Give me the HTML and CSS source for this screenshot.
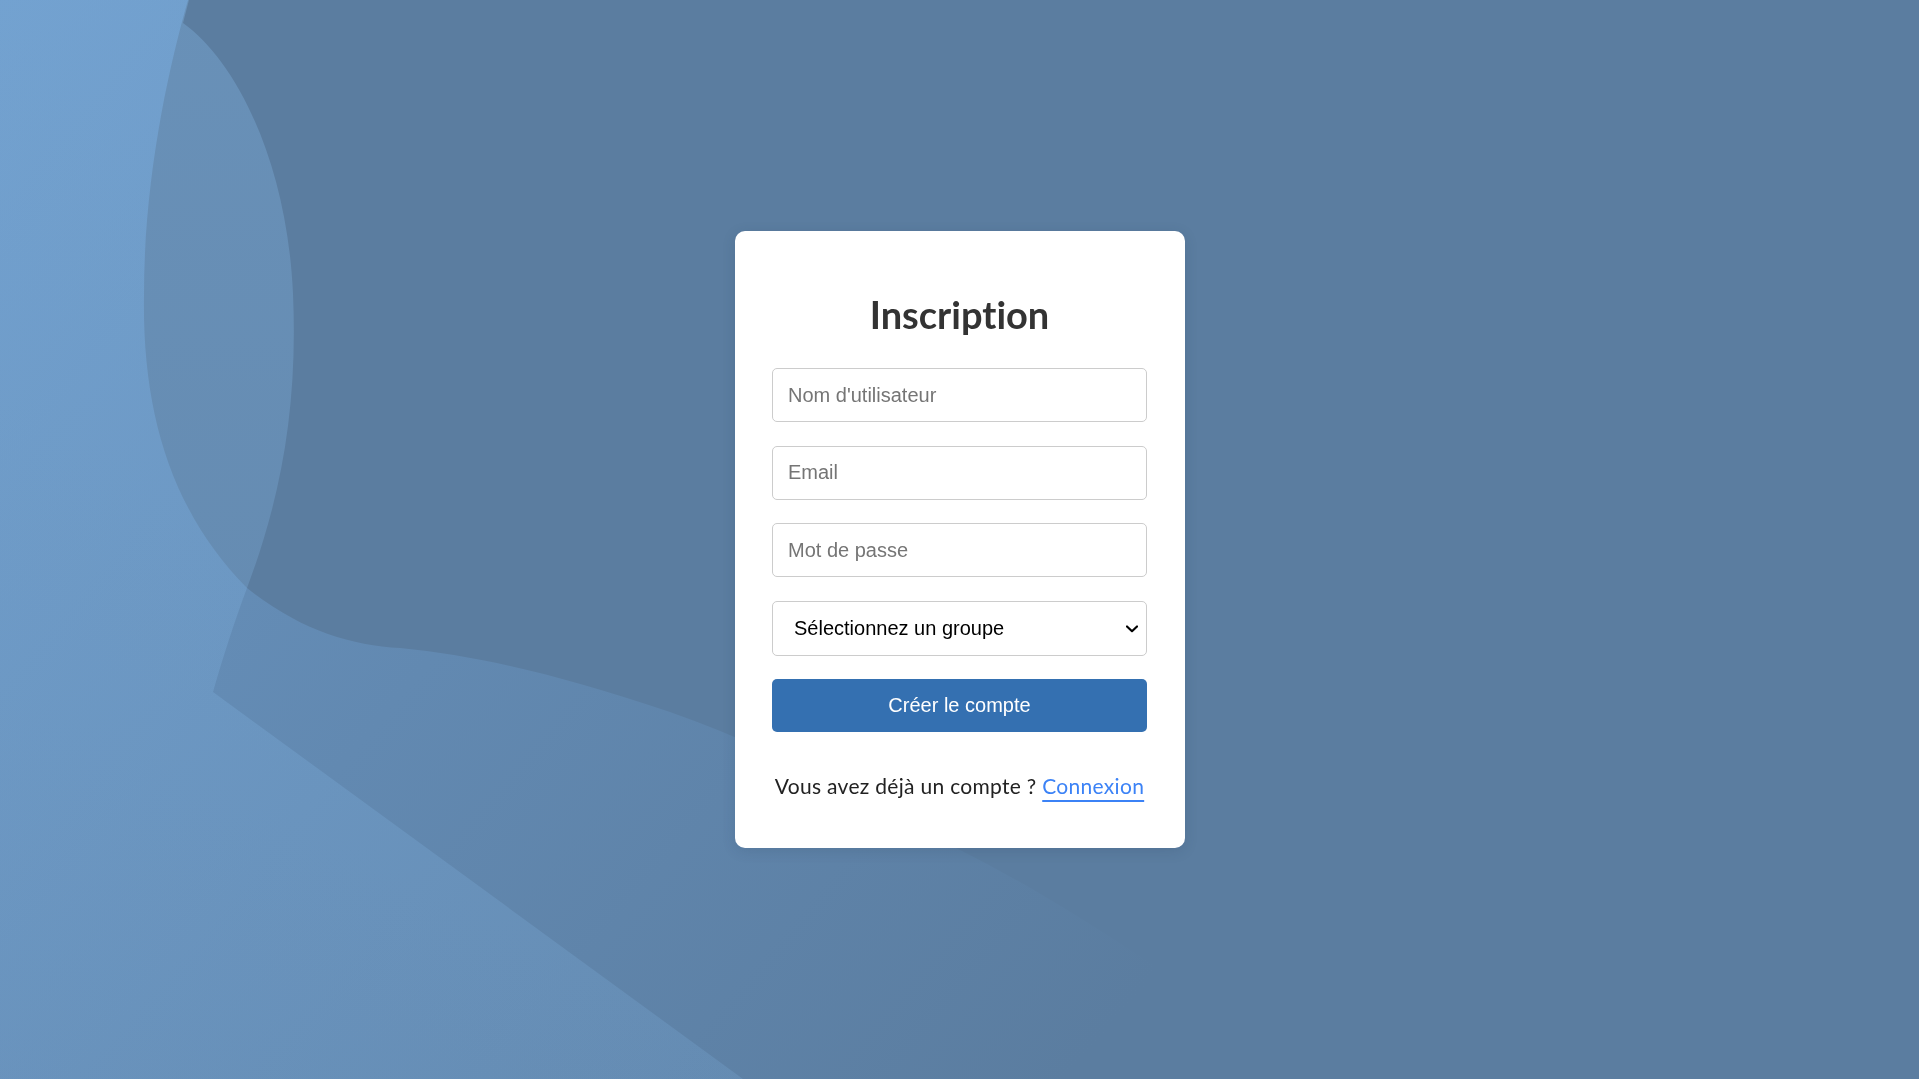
FILE: index.html
```html
<!DOCTYPE html>
<html lang="fr">
<head>
<meta charset="utf-8">
<title>Inscription</title>
<link rel="stylesheet" href="styles.css">
</head>
<body>
<svg class="backdrop" viewBox="0 0 1919 1079" preserveAspectRatio="none" aria-hidden="true">
  <defs>
    <linearGradient id="gNotD" gradientUnits="userSpaceOnUse" x1="0" y1="0" x2="1150" y2="980">
      <stop offset="0" stop-color="#6995c2"/>
      <stop offset="1" stop-color="#5b7da0"/>
    </linearGradient>
    <linearGradient id="gLight" gradientUnits="userSpaceOnUse" x1="0" y1="0" x2="0" y2="1079">
      <stop offset="0" stop-color="#8cc3f5" stop-opacity="0.28"/>
      <stop offset="1" stop-color="#8cc3f5" stop-opacity="0.16"/>
    </linearGradient>
  </defs>
  <rect x="0" y="0" width="1919" height="1079" fill="#5b7da0"/>
  <path d="M0,0 L188,0 C168,70 144,180 144,294 C142,410 170,510 247,588 C300,630 350,645 400,648 C480,656 560,675 670,712 C780,750 880,810 960,850 C1050,895 1150,960 1320,1079 L0,1079 Z" fill="url(#gNotD)"/>
  <path d="M0,0 L189,0 L183,23 C235,60 287,160 293,294 C298,410 280,500 247,588 C235,620 222,660 213,692 L743,1079 L0,1079 Z" fill="url(#gLight)"/>
</svg>

<main class="card">
  <h1 class="card-title">Inscription</h1>
  <form class="form">
    <input class="field" type="text" placeholder="Nom d'utilisateur">
    <input class="field" type="email" placeholder="Email">
    <input class="field" type="password" placeholder="Mot de passe">
    <div class="select-wrap">
      <select class="field select">
        <option>Sélectionnez un groupe</option>
      </select>
      <svg class="chevron" width="12" height="8" viewBox="0 0 12 8" aria-hidden="true">
        <polyline points="1,1.5 6,6.2 11,1.5" fill="none" stroke="#000" stroke-width="2.2" stroke-linecap="round" stroke-linejoin="round"/>
      </svg>
    </div>
    <button class="submit" type="button">Créer le compte</button>
  </form>
  <p class="switch">Vous avez déjà un compte ? <a class="switch-link" href="#">Connexion</a></p>
</main>
</body>
</html>
```

FILE: styles.css
```css
html, body {
  margin: 0;
  padding: 0;
}

body {
  min-height: 100vh;
  display: flex;
  align-items: center;
  justify-content: center;
  font-family: "Lato", "Open Sans", sans-serif;
  background: #5b7da0;
}

.backdrop {
  position: fixed;
  inset: 0;
  width: 100%;
  height: 100%;
  z-index: 0;
  display: block;
}

.card {
  position: relative;
  z-index: 1;
  box-sizing: border-box;
  width: 450px;
  padding: 38px 37.5px;
  background: #ffffff;
  border-radius: 10px;
  box-shadow: 0 3px 14px rgba(30, 50, 80, 0.14);
}

.card-title {
  margin: 23px 0 32px;
  font-family: "Lato", sans-serif;
  font-weight: 700;
  font-size: 38px;
  line-height: 44px;
  color: #333333;
  text-align: center;
  font-variant-ligatures: none;
  font-feature-settings: "liga" 0;
}

.form {
  display: flex;
  flex-direction: column;
}

.field {
  box-sizing: border-box;
  display: block;
  width: 100%;
  height: 54px;
  margin: 0 0 23.5px;
  padding: 0 15px;
  border: 1px solid #cccccc;
  border-radius: 5px;
  background: #ffffff;
  font-family: "Liberation Sans", Arial, sans-serif;
  font-size: 20px;
  color: #000000;
  outline: none;
}

.field::placeholder {
  color: #757575;
}

.select-wrap {
  position: relative;
  margin: 0 0 23.5px;
}

.select {
  height: 55px;
  margin: 0;
  padding: 0 30px 0 21px;
  -webkit-appearance: none;
  appearance: none;
  color: #000000;
}

.chevron {
  position: absolute;
  right: 9px;
  top: 24px;
  pointer-events: none;
}

.submit {
  display: block;
  width: 100%;
  height: 53px;
  border: none;
  border-radius: 5px;
  background: #3470b1;
  color: #ffffff;
  font-family: "Liberation Sans", Arial, sans-serif;
  font-size: 20px;
  cursor: pointer;
}

.switch {
  margin: 41.5px 0 12.5px;
  font-family: "Lato", sans-serif;
  font-size: 21px;
  letter-spacing: 0.3px;
  line-height: 24px;
  color: #222222;
  text-align: center;
  font-variant-ligatures: none;
}

.switch-link {
  color: #3b82f6;
  text-decoration: underline;
  text-decoration-thickness: 2px;
  text-underline-offset: 6px;
}
```
